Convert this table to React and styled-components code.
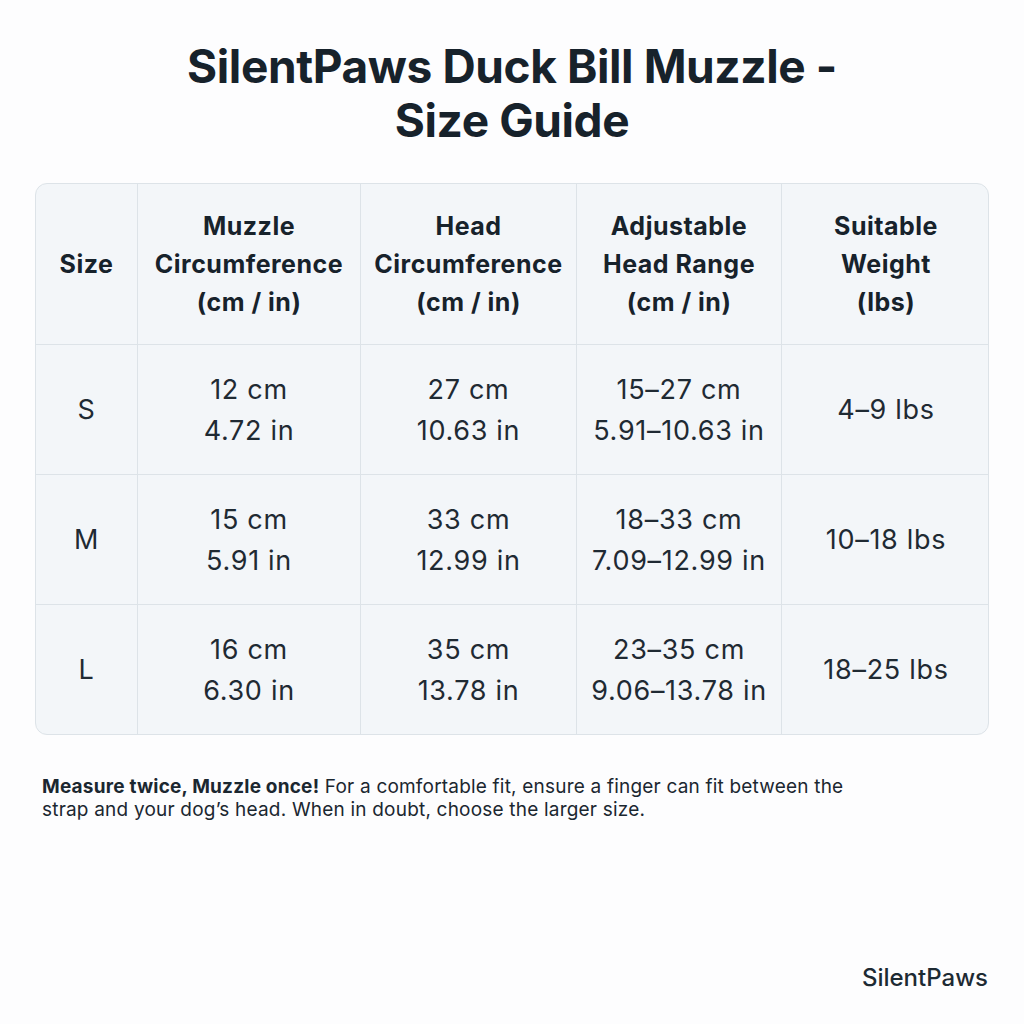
import React from "react";
import styled, { createGlobalStyle } from "styled-components";

const Global = createGlobalStyle`
  html, body { margin: 0; padding: 0; background: #fdfdfe; }
  body { font-family: Inter, "Liberation Sans", sans-serif; color: #1b2730; }
`;

const Page = styled.div`
  width: 1024px;
  height: 1024px;
  box-sizing: border-box;
  padding: 39px 35px 0 35px;
  display: flex;
  flex-direction: column;
  position: relative;
`;

const Title = styled.h1`
  margin: 0;
  text-align: center;
  font-family: Inter, "Liberation Sans", sans-serif;
  font-weight: 700;
  font-size: 46px;
  letter-spacing: -0.4px;
  line-height: 54px;
  color: #17222b;
`;

const Table = styled.div`
  margin-top: 36px;
  display: grid;
  grid-template-columns: 102px 223px 216px 205px 208px;
  grid-template-rows: 161px 130px 130px 129px;
  background: #f3f6f9;
  border: 1px solid #dde3e8;
  border-radius: 12px;
  overflow: hidden;
  box-sizing: border-box;
  width: 954px;
`;

const Cell = styled.div`
  display: flex;
  flex-direction: column;
  align-items: center;
  justify-content: center;
  text-align: center;
  border-right: ${(p) => (p.$last ? "none" : "1px solid #dde3e8")};
  border-bottom: ${(p) => (p.$bottom ? "none" : "1px solid #dde3e8")};
  font-size: ${(p) => (p.$head ? "25px" : "27px")};
  letter-spacing: ${(p) => (p.$head ? "0.5px" : "0.7px")};
  font-weight: ${(p) => (p.$head ? 700 : 400)};
  line-height: ${(p) => (p.$head ? "38px" : "41px")};
  color: ${(p) => (p.$head ? "#17222b" : "#1f2a33")};
`;

const Note = styled.p`
  margin: 40px 0 0 7px;
  font-size: 19px;
  letter-spacing: 0.2px;
  line-height: 23px;
  color: #1b2730;
  width: 822px;
`;

const Brand = styled.div`
  position: absolute;
  right: 36px;
  bottom: 32px;
  font-size: 24px;
  font-weight: 500;
  color: #1d2a33;
`;

const header = [
  ["Size"],
  ["Muzzle", "Circumference", "(cm / in)"],
  ["Head", "Circumference", "(cm / in)"],
  ["Adjustable", "Head Range", "(cm / in)"],
  ["Suitable", "Weight", "(lbs)"],
];

const rows = [
  [["S"], ["12 cm", "4.72 in"], ["27 cm", "10.63 in"], ["15–27 cm", "5.91–10.63 in"], ["4–9 lbs"]],
  [["M"], ["15 cm", "5.91 in"], ["33 cm", "12.99 in"], ["18–33 cm", "7.09–12.99 in"], ["10–18 lbs"]],
  [["L"], ["16 cm", "6.30 in"], ["35 cm", "13.78 in"], ["23–35 cm", "9.06–13.78 in"], ["18–25 lbs"]],
];

export default function App() {
  return (
    <>
      <Global />
      <Page>
        <Title>
          SilentPaws Duck Bill Muzzle -<br />Size Guide
        </Title>
        <Table>
          {header.map((lines, i) => (
            <Cell key={"h" + i} $head $last={i === 4}>
              {lines.map((l) => (
                <span key={l}>{l}</span>
              ))}
            </Cell>
          ))}
          {rows.map((row, r) =>
            row.map((lines, i) => (
              <Cell key={r + "-" + i} $last={i === 4} $bottom={r === 2}>
                {lines.map((l) => (
                  <span key={l}>{l}</span>
                ))}
              </Cell>
            ))
          )}
        </Table>
        <Note>
          <b>Measure twice, Muzzle once!</b> For a comfortable fit, ensure a finger can fit between the strap and your dog’s head. When in doubt, choose the larger size.
        </Note>
        <Brand>SilentPaws</Brand>
      </Page>
    </>
  );
}
